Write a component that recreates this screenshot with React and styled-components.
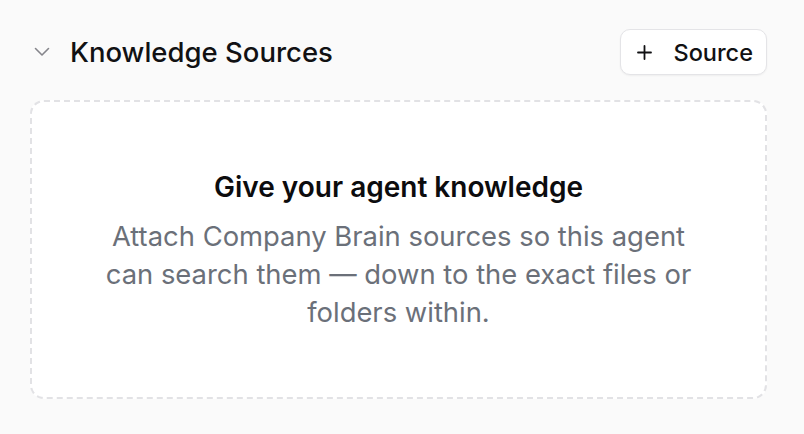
import React from "react";
import styled, { createGlobalStyle } from "styled-components";

const Global = createGlobalStyle`
  html, body { margin: 0; padding: 0; background: #fafafa; }
  body { font-family: Inter, "Noto Sans", sans-serif; -webkit-font-smoothing: antialiased; }
`;

const Page = styled.div`
  width: 804px;
  height: 434px;
  box-sizing: border-box;
  padding: 29px 37px 0 30px;
  display: flex;
  flex-direction: column;
  gap: 25px;
`;

const Header = styled.div`
  display: flex;
  align-items: center;
  justify-content: space-between;
  height: 46px;
`;

const TitleGroup = styled.div`
  display: flex;
  align-items: center;
  gap: 20px;
  padding-left: 4px;
`;

const Title = styled.h2`
  margin: 0;
  font-size: 27.5px;
  font-weight: 500;
  color: #111113;
  letter-spacing: 0;
`;

const AddButton = styled.button`
  display: flex;
  align-items: center;
  gap: 21px;
  height: 46px;
  box-sizing: border-box;
  padding: 0 13px 0 16px;
  background: #ffffff;
  border: 1px solid #e4e4e7;
  border-radius: 10px;
  box-shadow: 0 1px 2px rgba(0, 0, 0, 0.05);
  font-family: inherit;
  font-size: 23.5px;
  font-weight: 500;
  color: #111113;
  cursor: pointer;
`;

const Card = styled.div`
  height: 299px;
  box-sizing: border-box;
  background: #ffffff;
  border: 2px dashed #e2e2e5;
  border-radius: 14px;
  display: flex;
  flex-direction: column;
  align-items: center;
  justify-content: center;
  text-align: center;
  padding: 0 40px 0;
`;

const CardTitle = styled.h3`
  margin: 0 0 12px;
  font-size: 28px;
  line-height: 36px;
  font-weight: 600;
  color: #0c0c0e;
`;

const CardText = styled.p`
  margin: 0;
  max-width: 600px;
  font-size: 27.4px;
  line-height: 38px;
  color: #6b7079;
`;

const Chevron = () => (
  <svg width="16" height="10" viewBox="0 0 16 10" fill="none" stroke="#85858b" strokeWidth="1.6" strokeLinecap="round" strokeLinejoin="round">
    <path d="M1.5 1.5 8 8l6.5-6.5" />
  </svg>
);

const Plus = () => (
  <svg width="15" height="15" viewBox="0 0 15 15" fill="none" stroke="#111113" strokeWidth="1.8" strokeLinecap="round">
    <path d="M1 7.5h13" />
    <path d="M7.5 1v13" />
  </svg>
);

export default function App() {
  return (
    <>
      <Global />
      <Page>
        <Header>
          <TitleGroup>
            <Chevron />
            <Title>Knowledge Sources</Title>
          </TitleGroup>
          <AddButton>
            <Plus />
            Source
          </AddButton>
        </Header>
        <Card>
          <CardTitle>Give your agent knowledge</CardTitle>
          <CardText>
            Attach Company Brain sources so this agent can search them — down to the exact files or folders within.
          </CardText>
        </Card>
      </Page>
    </>
  );
}
